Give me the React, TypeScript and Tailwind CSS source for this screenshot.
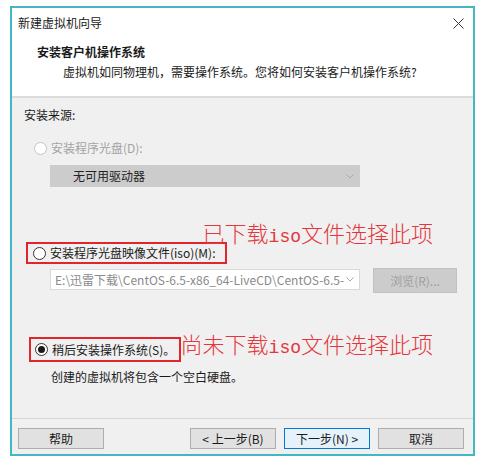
import React from "react";

const Chevron = () => (
  <svg width="8" height="5" viewBox="0 0 8 5" className="shrink-0">
    <polyline points="0.5,0.5 4,4 7.5,0.5" fill="none" stroke="#a8a8a8" strokeWidth="1" />
  </svg>
);

const Radio = ({ checked, disabled }: { checked?: boolean; disabled?: boolean }) => (
  <span
    className={
      "flex h-[13px] w-[13px] shrink-0 items-center justify-center rounded-full border bg-white " +
      (disabled ? "border-[#c4c4c4]" : "border-[#333333]")
    }
  >
    {checked && <span className="h-[7px] w-[7px] rounded-full bg-[#1a1a1a]" />}
  </span>
);

export default function App() {
  return (
    <div className="h-[464px] w-[478px] bg-white pl-[10px] pt-[6px] font-['Noto_Sans_CJK_SC','Liberation_Sans',sans-serif] text-[12px] text-[#1a1a1a]">
      <div className="relative flex h-[450px] w-[465px] flex-col border-2 border-[#44b8c2] bg-[#f0f0f0]">
        {/* header */}
        <div className="border-b-2 border-[#dcdcdc] bg-white pb-[14px]">
          <div className="flex h-[30px] items-center justify-between pl-[6px] pr-[9px]">
            <span className="leading-[20px]">新建虚拟机向导</span>
            <svg width="11" height="11" viewBox="0 0 11 11">
              <path d="M0.5 0.5 L10.5 10.5 M10.5 0.5 L0.5 10.5" stroke="#333" strokeWidth="1" />
            </svg>
          </div>
          <div className="mt-[4px] pl-[25px] font-bold leading-[20px]">安装客户机操作系统</div>
          <div className="pl-[51px] leading-[20px]">虚拟机如同物理机，需要操作系统。您将如何安装客户机操作系统?</div>
        </div>

        {/* body */}
        <div className="flex flex-1 flex-col">
          <div className="pl-[12px] pt-[7px] leading-[20px]">安装来源:</div>

          <div className="mt-[13px] flex h-[20px] items-center gap-[4px] pl-[22px]">
            <Radio disabled />
            <span className="text-[#a3a3a3]">安装程序光盘(D):</span>
          </div>

          <div className="ml-[38px] mt-[7px] flex h-[22px] w-[310px] items-center justify-between bg-[#cccccc] pl-[23px] pr-[6px]">
            <span className="text-[#222]">无可用驱动器</span>
            <Chevron />
          </div>

          <div className="ml-[14px] mt-[55px] flex h-[22px] w-fit items-center gap-[4px] border-2 border-[#e0262c] pl-[5px] pr-[9px]">
            <Radio />
            <span>安装程序光盘映像文件(iso)(M):</span>
          </div>

          <div className="ml-[38px] mt-[4px] flex items-start gap-[13px]">
            <div className="mt-[1px] flex h-[21px] w-[310px] items-center justify-between overflow-hidden border border-[#d9d9d9] bg-white pl-[4px] pr-[5px]">
              <span className="whitespace-nowrap text-[#8a8a8a]">E:\迅雷下载\CentOS-6.5-x86_64-LiveCD\CentOS-6.5-</span>
              <Chevron />
            </div>
            <div className="flex h-[25px] w-[84px] items-center justify-center border border-[#c2c2c2] bg-[#cccccc] text-[#a0a0a0]">
              浏览(R)...
            </div>
          </div>

          <div className="ml-[17px] mt-[44px] flex h-[25px] w-fit items-center gap-[4px] border-2 border-[#e0262c] pl-[4px] pr-[4px]">
            <Radio checked />
            <span>稍后安装操作系统(S)。</span>
          </div>

          <div className="mt-[5px] pl-[39px] leading-[20px]">创建的虚拟机将包含一个空白硬盘。</div>

          {/* footer */}
          <div className="mt-auto flex justify-between border-t border-[#d5d5d5] pb-[5px] pl-[6px] pr-[9px] pt-[9px]">
            <div className="flex h-[21px] w-[86px] items-center justify-center border border-[#adadad] bg-[#e1e1e1]">帮助</div>
            <div className="flex gap-[8px]">
              <div className="flex h-[21px] w-[86px] items-center justify-center border border-[#adadad] bg-[#e1e1e1]">&lt; 上一步(B)</div>
              <div className="flex h-[21px] w-[86px] items-center justify-center border border-[#0078d7] bg-[#e5f1fb]">下一步(N) &gt;</div>
              <div className="flex h-[21px] w-[86px] items-center justify-center border border-[#adadad] bg-[#e1e1e1]">取消</div>
            </div>
          </div>
        </div>

        {/* annotations */}
        <div className="absolute right-[40px] top-[211px] whitespace-nowrap text-[22px] font-light leading-[26px] text-[#e4363c]">
          已下载<span className="font-['Liberation_Mono',monospace] text-[18px]">iso</span>文件选择此项
        </div>
        <div className="absolute right-[40px] top-[322px] whitespace-nowrap text-[22px] font-light leading-[26px] text-[#e4363c]">
          尚未下载<span className="font-['Liberation_Mono',monospace] text-[18px]">iso</span>文件选择此项
        </div>
      </div>
    </div>
  );
}
